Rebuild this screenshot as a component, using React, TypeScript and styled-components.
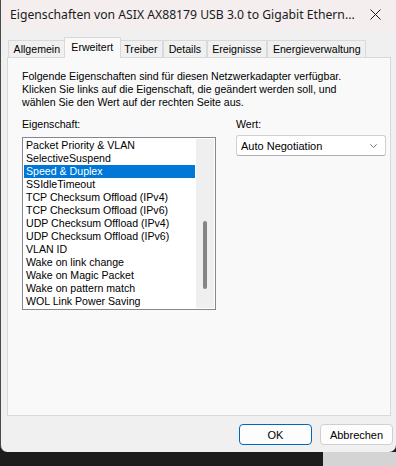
import styled, {createGlobalStyle} from 'styled-components'

const GlobalStyle = createGlobalStyle`
  html, body {
    margin: 0;
    padding: 0;
    background: #1c1c1c;
  }
  * {
    box-sizing: border-box;
  }
`

const tabs = ['Allgemein', 'Erweitert', 'Treiber', 'Details', 'Ereignisse', 'Energieverwaltung']

const properties = [
  'Packet Priority & VLAN',
  'SelectiveSuspend',
  'Speed & Duplex',
  'SSIdleTimeout',
  'TCP Checksum Offload (IPv4)',
  'TCP Checksum Offload (IPv6)',
  'UDP Checksum Offload (IPv4)',
  'UDP Checksum Offload (IPv6)',
  'VLAN ID',
  'Wake on link change',
  'Wake on Magic Packet',
  'Wake on pattern match',
  'WOL Link Power Saving',
]

export default function App() {
  return (
    <>
      <GlobalStyle />
      <Desktop>
        <Window>
          <TitleBar>
            <Title>Eigenschaften von ASIX AX88179 USB 3.0 to Gigabit Ethern...</Title>
            <CloseButton>
              <svg width="11" height="11" viewBox="0 0 11 11">
                <path d="M0.5 0.5 L10.5 10.5 M10.5 0.5 L0.5 10.5" stroke="#1b1b1b" strokeWidth="1" />
              </svg>
            </CloseButton>
          </TitleBar>

          <TabRow>
            {tabs.map(t => (
              <Tab key={t} $active={t === 'Erweitert'}>
                {t}
              </Tab>
            ))}
          </TabRow>

          <Panel>
            <Intro>
              Folgende Eigenschaften sind für diesen Netzwerkadapter verfügbar.
              <br />
              Klicken Sie links auf die Eigenschaft, die geändert werden soll, und
              <br />
              wählen Sie den Wert auf der rechten Seite aus.
            </Intro>
            <Columns>
              <Column>
                <Label>Eigenschaft:</Label>
                <ListBox>
                  <Items>
                    {properties.map(p => (
                      <Item key={p} $selected={p === 'Speed & Duplex'}>
                        {p}
                      </Item>
                    ))}
                  </Items>
                  <ScrollTrack>
                    <Thumb />
                  </ScrollTrack>
                </ListBox>
              </Column>
              <Column>
                <Label>Wert:</Label>
                <Select>
                  <span>Auto Negotiation</span>
                  <svg width="7" height="4" viewBox="0 0 7 4">
                    <path d="M0.3 0.3 L3.5 3.5 L6.7 0.3" fill="none" stroke="#6a6a6a" strokeWidth="0.9" />
                  </svg>
                </Select>
              </Column>
            </Columns>
          </Panel>

          <ButtonRow>
            <Button $primary>OK</Button>
            <Button>Abbrechen</Button>
          </ButtonRow>
        </Window>
        <Backdrop>
          <DarkArea />
          <LightArea />
        </Backdrop>
      </Desktop>
    </>
  )
}

const Desktop = styled.div`
  width: 396px;
  height: 466px;
  display: flex;
  flex-direction: column;
  overflow: hidden;
  background: #1c1c1c;
`
const Window = styled.div`
  height: 452px;
  width: 396px;
  flex: none;
  background: #f0f0f0;
  border-left: 1px solid #4a4a4a;
  border-bottom-left-radius: 7px;
  border-bottom-right-radius: 7px;
  display: flex;
  flex-direction: column;
  font-family: 'Liberation Sans', Arial, sans-serif;
  font-size: 10.6px;
  color: #000;
`
const TitleBar = styled.div`
  height: 30px;
  flex: none;
  background: #f4eeee;
  display: flex;
  align-items: center;
  padding-left: 9px;
`
const Title = styled.div`
  flex: 1;
  font-family: 'Segoe UI', 'Noto Sans', sans-serif;
  font-size: 12.2px;
  color: #1b1b1b;
  white-space: nowrap;
  margin-top: -1px;
`
const CloseButton = styled.div`
  width: 46px;
  height: 30px;
  display: flex;
  align-items: center;
  justify-content: center;
  margin-top: -1px;
`
const TabRow = styled.div`
  height: 20px;
  margin-top: 7px;
  padding-left: 7px;
  display: flex;
  align-items: flex-end;
  flex: none;
`
const Tab = styled.div<{$active?: boolean}>`
  position: relative;
  height: ${p => (p.$active ? '21px' : '17px')};
  margin: ${p => (p.$active ? '0 -2px -1px' : '0')};
  padding: ${p => (p.$active ? '1px 6.6px 0' : '0 4.6px')};
  z-index: ${p => (p.$active ? 1 : 0)};
  line-height: 16px;
  background: ${p => (p.$active ? '#f9f9f9' : '#f0f0f0')};
  border: 1px solid #d9d9d9;
  border-bottom: none;
  white-space: nowrap;
`
const Panel = styled.div`
  height: 359px;
  margin: 0 5px 0 6px;
  flex: none;
  background: #f9f9f9;
  border: 1px solid #d9d9d9;
  padding: 12px 14px 0;
`
const Intro = styled.div`
  line-height: 13px;
`
const Columns = styled.div`
  display: grid;
  grid-template-columns: 194px 150px;
  column-gap: 20px;
  margin-top: 9px;
`
const Column = styled.div`
  display: flex;
  flex-direction: column;
`
const Label = styled.div`
  line-height: 13px;
  height: 13px;
  margin-bottom: 5px;
`
const ListBox = styled.div`
  margin-top: 1px;
  height: 173px;
  border: 1px solid #828790;
  background: #fff;
  padding: 1px;
  display: flex;
  gap: 1px;
`
const Items = styled.div`
  flex: 1;
  display: flex;
  flex-direction: column;
`
const Item = styled.div<{$selected?: boolean}>`
  height: 13px;
  line-height: 13px;
  padding-left: 2px;
  white-space: nowrap;
  background: ${p => (p.$selected ? '#0078d7' : 'transparent')};
  color: ${p => (p.$selected ? '#fff' : '#000')};
`
const ScrollTrack = styled.div`
  width: 18px;
  background: #efefef;
  display: flex;
  justify-content: center;
  padding-top: 82px;
`
const Thumb = styled.div`
  width: 4px;
  height: 68px;
  border-radius: 2px;
  background: #858585;
`
const Select = styled.div`
  height: 21px;
  margin-top: -1px;
  border: 1px solid #d0d0d0;
  border-bottom-color: #b0b0b0;
  border-radius: 3px;
  background: #fff;
  display: flex;
  align-items: center;
  justify-content: space-between;
  padding: 0 8px 0 4px;
  font-size: 11px;
`
const ButtonRow = styled.div`
  display: flex;
  justify-content: flex-end;
  gap: 8px;
  margin-top: 8px;
  padding-right: 3px;
`
const Button = styled.div<{$primary?: boolean}>`
  width: 73px;
  height: 21px;
  display: flex;
  align-items: center;
  justify-content: center;
  background: #fdfdfd;
  border: 1px solid ${p => (p.$primary ? '#0067c0' : '#d0d0d0')};
  border-radius: 4px;
  font-size: 11px;
`
const Backdrop = styled.div`
  flex: 1;
  display: flex;
`
const DarkArea = styled.div`
  width: 323px;
  background: #1c1c1c;
`
const LightArea = styled.div`
  flex: 1;
  background: #d4d4d4;
`
